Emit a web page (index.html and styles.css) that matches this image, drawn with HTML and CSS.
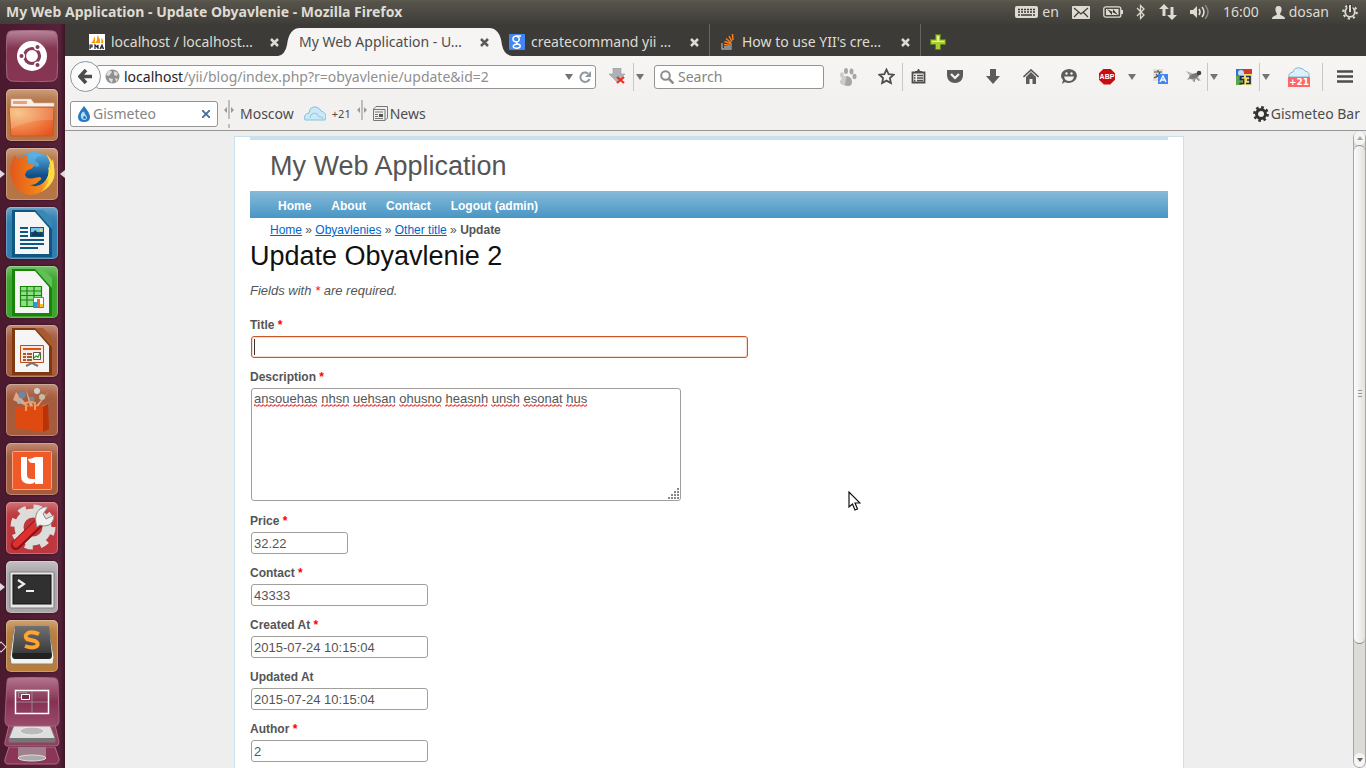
FILE: index.html
```html
<!DOCTYPE html>
<html lang="en">
<head>
<meta charset="utf-8">
<title>My Web Application - Update Obyavlenie</title>
<link rel="stylesheet" href="styles.css">
</head>
<body>
<header class="panel">
  <span class="panel-title">My Web Application - Update Obyavlenie - Mozilla Firefox</span>
  <div class="indicators">
    <span class="indicator"><svg width="23" height="12" viewBox="0 0 23 12"><rect width="23" height="12" rx="2" fill="#dfdbd2"/><path d="M3 3.5h17M3 6h17" stroke="#3c3b37" stroke-width="1.6" stroke-dasharray="2 1"/><path d="M3 9h2M6 9h11M18 9h2" stroke="#3c3b37" stroke-width="1.5"/></svg>en</span>
    <svg width="18" height="13" viewBox="0 0 18 13"><rect width="18" height="13" rx="1" fill="#dfdbd2"/><path d="M2 2l7 6 7-6M2 11l5-5M16 11l-5-5" fill="none" stroke="#3c3b37" stroke-width="1.2"/></svg>
    <svg width="20" height="12" viewBox="0 0 20 12"><rect x=".8" y=".8" width="17" height="10.4" rx="2" fill="none" stroke="#dfdbd2" stroke-width="1.3"/><path d="M19 4v4" stroke="#dfdbd2" stroke-width="2"/><rect x="3" y="3" width="12.500" height="6" fill="#dfdbd2"/><path d="M4 3l6 3V3l5 6-6-3v3z" fill="#3c3b37"/></svg>
    <svg width="10" height="16" viewBox="0 0 10 16"><path d="M1 4l7 7-3.500 3.500v-13L8 5l-7 7" fill="none" stroke="#dfdbd2" stroke-width="1.3"/></svg>
    <svg width="18" height="16" viewBox="0 0 18 16"><path d="M5 0l5 5H6.500v7h-3V5H0zM13 16l5-5h-3.500V3h-3v8H8z" fill="#dfdbd2"/></svg>
    <svg width="20" height="14" viewBox="0 0 20 14"><path d="M0 5h3l4-4v12L3 9H0z" fill="#dfdbd2"/><path d="M9 4q2 3 0 6M12 2q4 5 0 10" fill="none" stroke="#dfdbd2" stroke-width="1.600"/><path d="M15 0q6 7 0 14" fill="none" stroke="#8a8780" stroke-width="1.500"/></svg>
    <span>16:00</span>
    <span class="indicator"><svg width="13" height="13" viewBox="0 0 13 13"><path d="M6.500 0c2.500 0 3.500 2 3 4.500C9.200 6.300 8 7 8.200 8.500c.3 1.300 4.800 1 4.800 4.500H0c0-3.500 4.500-3.200 4.800-4.500C5 7 3.800 6.300 3.500 4.500 3 2 4 0 6.500 0z" fill="#dfdbd2"/></svg>dosan</span>
    <svg width="16" height="16" viewBox="0 0 16 16"><circle cx="8" cy="8" r="4.800" fill="none" stroke="#dfdbd2" stroke-width="1.800"/><circle cx="8" cy="8" r="6.700" fill="none" stroke="#dfdbd2" stroke-width="2.200" stroke-dasharray="2.200 3.060"/><path d="M8 0v8" stroke="#3c3b37" stroke-width="5"/><path d="M8 1v7" stroke="#dfdbd2" stroke-width="2"/></svg>
  </div>
</header>

<div class="desktop">
  <nav class="launcher" aria-label="Launcher">
    <button class="app app-dash" aria-label="Dash"><svg viewBox="0 0 52 52"><path d="M5 1Q26-1 47 1q3 0 4 4 2 21 0 42-1 3-4 4-21 2-42 0-3-1-4-4-2-21 0-42 1-4 4-4z" fill="url(#dash)" stroke="#a26780"/><circle cx="26" cy="26" r="15" fill="#fff"/><circle cx="26" cy="26" r="7.500" fill="none" stroke="#863c5a" stroke-width="3.200"/><g fill="#863c5a" stroke="#fff" stroke-width="1.500"><circle cx="15.500" cy="26" r="2.800"/><circle cx="31.500" cy="17" r="2.800"/><circle cx="31.500" cy="35" r="2.800"/></g><defs><linearGradient id="dash" x2="0" y2="1"><stop stop-color="#b9889c"/><stop offset=".35" stop-color="#823650"/><stop offset="1" stop-color="#873452"/></linearGradient></defs></svg></button>
    <button class="app app-tan" aria-label="Files"><svg viewBox="0 0 52 52"><path d="M5 10h20l3 4h20v8H5z" fill="#f4f1ed" stroke="#c6b8a8" stroke-width=".6"/><path d="M7 12h14v3H7z" fill="#f1a06d"/><path d="M3 18h45l-1 29H5z" fill="url(#folder)" stroke="#c45a24"/><path d="M4 19h43v12Q24 30 5 40z" fill="#fff" opacity=".15"/><defs><radialGradient id="folder" cx=".2" cy=".2" r="1"><stop stop-color="#f7bd78"/><stop offset="1" stop-color="#e95420"/></radialGradient></defs></svg></button>
    <button class="app app-tan app-running app-focused" aria-label="Firefox"><svg viewBox="0 0 52 52"><circle cx="28" cy="24" r="20" fill="url(#globe)"/><path d="M20 8q9-5 18 0-8-1-9 5 6 2 3 6-5-2-9 1-1-6-3-12z" fill="#60b7e7" opacity=".6"/><path d="M9 7l3 5q4-4 10-5-2 5 0 8l6 2q-1 4-6 5-3 2-3 5 2 5 9 3l6-1q3 2-1 4-3 4-9 4 7 3 13-2 7-6 6-18l4-6q3 13-2 23-8 13-21 13-12-1-17-12Q2 23 6 14q1-4 3-7z" fill="url(#fox)"/><path d="M40 6q11 10 8 24-3 9-13 14 7-6 8-14l-3 3q4-8 2-14l3 3q0-8-5-16z" fill="#ffdc45"/><defs><linearGradient id="globe" x2="0" y2="1"><stop stop-color="#5ab4e6"/><stop offset=".6" stop-color="#114d88"/></linearGradient><linearGradient id="fox" x2="1"><stop stop-color="#e3571a"/><stop offset=".7" stop-color="#f28a1c"/><stop offset="1" stop-color="#ffd93b"/></linearGradient></defs></svg></button>
    <button class="app app-blue" aria-label="Writer"><svg viewBox="0 0 52 52"><path d="M6 3h28l12 15v32H6z" fill="#0f5682"/><path d="M9 5h20l14 16v26H9z" fill="#f5f5f5"/><path d="M29 3h8l9 9v10z" fill="#3887b4"/><path d="M14 21h8M14 25h8M14 29h8M14 33h24M14 37h24M14 41h18" stroke="#0f5682" stroke-width="2"/><path d="M24 20h14v10H24z" fill="#0f5682"/><path d="M25 21h12v4H25z" fill="#7cc5e6"/><path d="M25 29l4-6 4 4 2-2 2 4z" fill="#163c54"/><circle cx="35" cy="23" r="1.500" fill="#ffd64d"/></svg></button>
    <button class="app app-green" aria-label="Calc"><svg viewBox="0 0 52 52"><path d="M6 3h28l12 15v32H6z" fill="#178509"/><path d="M9 5h20l14 16v26H9z" fill="#f5f5f5"/><path d="M29 3h8l9 9v10z" fill="#5fc154"/><path d="M14 20h22v21H14z" fill="#8fe084"/><path d="M14 20.500h22M14 25h22M14 29.500h22M14 34h22M14 40.500h22M14.500 20v21M21 20v21M28 20v21M35.500 20v21" stroke="#178509" stroke-width="1.200"/><path d="M27.500 31.500h10v10h-10z" fill="#fff" stroke="#777"/><path d="M28 36h3v5h-3z" fill="#2798df"/><path d="M31 33h3v8h-3z" fill="#e56a2c"/><path d="M34 38h3v3h-3z" fill="#f7c12b"/></svg></button>
    <button class="app app-brown" aria-label="Impress"><svg viewBox="0 0 52 52"><path d="M6 3h28l12 15v32H6z" fill="#80380f"/><path d="M9 5h20l14 16v26H9z" fill="#f5f5f5"/><path d="M29 3h8l9 9v10z" fill="#a75b31"/><path d="M14.500 20.500h23v17h-23z" fill="#fbe9df" stroke="#ba4d17"/><path d="M17 24h18" stroke="#d25716" stroke-width="2"/><path d="M17 29h3M17 32h3M17 35h3M21 29h5M21 32h5M21 35h5" stroke="#7e2c08" stroke-width="1.500"/><path d="M27.500 27.500h7v7h-7z" fill="#fff" stroke="#555"/><path d="M28 33l2-2 2 1 2-4" fill="none" stroke="#2b9d21" stroke-width="1.400"/><path d="M26 38l-6 3M26 38l6 3" stroke="#777" stroke-width="2"/></svg></button>
    <button class="app app-brown" aria-label="Software Center"><svg viewBox="0 0 52 52"><path d="M10 8l14 16L20 6l8 18L43 7 31 24l14-6-16 8-22-10z" fill="#f6c5aa" opacity=".7"/><circle cx="16" cy="11" r="3.500" fill="#6788a7"/><circle cx="31" cy="7" r="3" fill="#d3d1cf"/><circle cx="36" cy="13" r="3" fill="#c8bc9d"/><circle cx="26" cy="15" r="2.500" fill="#7b8995"/><circle cx="13" cy="18" r="2" fill="#9fb5c6"/><path d="M9 23l31-1 2 23-6 3-26-4z" fill="#df4a10"/><path d="M37 23l5-3 1 25-6 3z" fill="#b93309"/><path d="M20 27v-8q5-2 9 0v7" fill="none" stroke="#f49a58" stroke-width="2"/></svg></button>
    <button class="app app-brown" aria-label="Ubuntu One"><svg viewBox="0 0 52 52"><rect x="6.500" y="8.500" width="39" height="38" rx="1" fill="#f05a28" stroke="#ffa47e"/><path d="M15 14h6v18q0 4 5 4h3V20h-3q-3 0-4-4 4 0 7-2h8v27h-8v-2q-2 2-5 2-9 0-9-8z" fill="#fff"/></svg></button>
    <button class="app app-red" aria-label="System Settings"><svg viewBox="0 0 52 52"><circle cx="27" cy="25" r="14" fill="none" stroke="#dcdcda" stroke-width="9"/><circle cx="27" cy="25" r="20" fill="none" stroke="#dcdcda" stroke-width="5" stroke-dasharray="8 7.700"/><path d="M10 43l25-24" stroke="#8f1010" stroke-width="10" stroke-linecap="round"/><path d="M10 42l22-21" stroke="#dd3030" stroke-width="7" stroke-linecap="round"/><path d="M30 21q-2-9 4-14 4-3 8-2l-5 7 3 5 8-4q0 7-5 10-5 2-9 0l-3 2z" fill="#f0f0ee" stroke="#888"/></svg></button>
    <button class="app app-gray app-running" aria-label="Terminal"><svg viewBox="0 0 52 52"><rect x="4" y="11" width="44" height="36" rx="1" fill="#e8e8e8" stroke="#7f7f7f"/><rect x="7" y="14" width="38" height="29" fill="#303030" stroke="#111"/><path d="M12 19l6 4-6 4" fill="none" stroke="#eee" stroke-width="2.200"/><path d="M20 30h8" stroke="#eee" stroke-width="2"/></svg></button>
    <button class="app app-gold app-open" aria-label="Sublime Text"><svg viewBox="0 0 52 52"><path d="M8 8h35l5 29-1 7H5l-1-7z" fill="#f2f2ef" stroke="#8a806f"/><path d="M9 6h34l3 29q0 4-3 4H9q-3 0-3-4z" fill="url(#key)"/><path d="M33 14q-7-3-11-1-4 3-1 6 3 1 8 2 4 2 2 5-4 3-12 0" fill="none" stroke="#ffa333" stroke-width="4"/><defs><linearGradient id="key" x2="0" y2="1"><stop stop-color="#707070"/><stop offset=".82" stop-color="#3b3b3b"/><stop offset=".83" stop-color="#222"/></linearGradient></defs></svg></button>
    <button class="app app-spaces" aria-label="Workspaces"><svg viewBox="0 0 56 50"><path d="M5 1Q28-1 51 1q2 0 3 4l1 38q0 6-4 6H5q-4 0-4-6L3 5q0-4 2-4z" fill="url(#ws)" stroke="#a5617e"/><path d="M11.500 13.500h33v23h-33zM28 13v24M11 25h34" fill="none" stroke="#96868d" stroke-width="1"/><path d="M11.500 13.500h33v23h-33z" fill="none" stroke="#fff" stroke-width="1.500"/><path d="M14.500 15.500h8v5h-8z" fill="none" stroke="#96868d"/><path d="M17.500 17.500h8v5h-8z" fill="#762b4a" stroke="#fff"/><defs><linearGradient id="ws" x2="0" y2="1"><stop stop-color="#b4778f"/><stop offset=".5" stop-color="#863153"/><stop offset="1" stop-color="#9a4b6c"/></linearGradient></defs></svg></button>
    <button class="app app-folded" aria-label="Drive"><svg viewBox="0 0 56 22"><path d="M5 0h46l4 17q0 4-4 4H4q-4 0-3-4z" fill="#91405f" stroke="#b06884"/><path d="M10 0h36l5 13v4H5v-4z" fill="#dedede" stroke="#777"/><ellipse cx="28" cy="6" rx="12" ry="4" fill="#bbb" stroke="#eee"/><path d="M5 13h46v4H5z" fill="#777"/></svg></button>
    <button class="app app-folded" aria-label="Trash"><svg viewBox="0 0 56 22"><path d="M5 0h46l4 12q0 5-4 5H4q-4 0-3-5z" fill="#8c3657" stroke="#b06884"/><path d="M14 0h28v11q-14 5-28 0z" fill="#a17f8d"/><ellipse cx="28" cy="11" rx="14" ry="3" fill="#aaa" stroke="#ddd"/></svg></button>
  </nav>

  <div class="browser">
    <div class="tabs">
      <div class="tab">
        <svg width="16" height="16" viewBox="0 0 16 16"><path d="M0 0h16v16H0z" fill="#fff"/><path d="M2 9q3-2 3-7 2 3 1 7zM6 9q3-3 2-8 4 4 3 8zM12 9q1-3 0-5 3 2 2 5z" fill="#f90"/><path d="M1 15v-4h2v2H1M6 15v-4l2 2 1-2v4M11 15l2-4 1.500 4M12 14h2" fill="none" stroke="#223" stroke-width="1.200"/></svg>
        <button class="tab-label">localhost / localhost…</button>
        <button class="tab-close" aria-label="Close tab"><svg width="9" height="9" viewBox="0 0 9 9"><path d="M1 1l7 7M8 1L1 8"/></svg></button>
      </div>
      <div class="tab tab-active">
        <svg class="tab-shape" viewBox="0 0 234 28" preserveAspectRatio="none"><path d="M0 28Q7 27 9 17 11 0 22 0H211Q222 0 224 17 226 27 234 28z" fill="#f6f5f4"/></svg>
        <button class="tab-label">My Web Application - U…</button>
        <button class="tab-close" aria-label="Close tab"><svg width="9" height="9" viewBox="0 0 9 9"><path d="M1 1l7 7M8 1L1 8"/></svg></button>
      </div>
      <div class="tab tab-ruled">
        <svg width="16" height="16" viewBox="0 0 16 16"><rect width="16" height="16" rx="1" fill="#4285f4"/><path d="M12 2H8Q4 2 4 5t4 3q3-1 2-4-1-2-3-2M8 8q-1 1 1 2 3 1 2 3-2 2-5 1-3-1-1-3 2-1 4-1" fill="none" stroke="#fff" stroke-width="1.500"/></svg>
        <button class="tab-label">createcommand yii …</button>
        <button class="tab-close" aria-label="Close tab"><svg width="9" height="9" viewBox="0 0 9 9"><path d="M1 1l7 7M8 1L1 8"/></svg></button>
      </div>
      <div class="tab tab-ruled">
        <svg width="16" height="16" viewBox="0 0 16 16"><path d="M2 9v6h9V9" fill="none" stroke="#a5a5a5" stroke-width="1.300"/><path d="M4 13h6" stroke="#aaa" stroke-width="1.500"/><path d="M4 10.500l6 .7M4.500 7.500l6 2M6 4.500l5 4M9 2l3 5.500M12.500 0l.5 6" stroke="#f48024" stroke-width="1.500"/></svg>
        <button class="tab-label">How to use YII's cre…</button>
        <button class="tab-close" aria-label="Close tab"><svg width="9" height="9" viewBox="0 0 9 9"><path d="M1 1l7 7M8 1L1 8"/></svg></button>
      </div>
      <button class="tab-new" aria-label="New tab"><svg width="16" height="16" viewBox="0 0 16 16"><path d="M5.500.5h5v5h5v5h-5v5h-5v-5h-5v-5h5z" fill="#a9cc32" stroke="#5c821b"/><path d="M7 2h2v5h5v1H2V7h5z" fill="#e3f19a"/></svg></button>
    </div>

    <div class="navbar">
      <button class="back" aria-label="Back"><svg width="15" height="15" viewBox="0 0 15 15"><path d="M8 1L2 7.500 8 14M2 7.500h12" fill="none" stroke="#4c4c4c" stroke-width="3.600"/></svg></button>
      <div class="address">
        <svg width="15" height="15" viewBox="0 0 15 15"><circle cx="7.500" cy="7.500" r="7" fill="#8f8f8f"/><path d="M3 2q3-1 4 1L4 7 1 6zM9 2l4 2-1 3-3-1zM4 9l4 1-1 4-3-3zM10 9l3 1-2 3z" fill="#dcdcdc"/></svg>
        <span class="url"><b>localhost</b>/yii/blog/index.php?r=obyavlenie/update&amp;id=2</span>
        <button class="bare" aria-label="History"><svg width="8" height="6" viewBox="0 0 8 6"><path d="M0 0h8L4 6z" fill="#737373"/></svg></button>
        <button class="bare" aria-label="Reload"><svg width="12" height="12" viewBox="0 0 12 12"><path d="M10.500 8A4.700 4.700 0 1 1 9 2.500" fill="none" stroke="#8c97a0" stroke-width="2"/><path d="M12 0v6H6z" fill="#8c97a0"/></svg></button>
      </div>
      <button class="tool tool-snug tool-ruled tool-download" aria-label="Downloader"><svg width="17" height="17" viewBox="0 0 17 17"><path d="M4 0h8v6h4l-8 8-8-8h4z" fill="#aeb2b5" stroke="#8d9194" stroke-width=".5"/><path d="M8 9l7 6M15 9l-7 6" stroke="#f02b20" stroke-width="2.200"/></svg></button>
      <button class="drop" aria-label="Downloader menu"><svg width="8" height="6" viewBox="0 0 8 6"><path d="M0 0h8L4 6z" fill="#737373"/></svg></button>
      <label class="search"><svg width="14" height="14" viewBox="0 0 14 14"><circle cx="5.500" cy="5.500" r="4.300" fill="none" stroke="#8c8c8c" stroke-width="2"/><path d="M8.500 8.500l5 5" stroke="#8c8c8c" stroke-width="2.500"/></svg><input type="search" placeholder="Search" aria-label="Search"></label>
      <button class="tool tool-paw" aria-label="Paw"><svg width="18" height="18" viewBox="0 0 18 18"><g fill="#a6a6a6"><ellipse cx="7" cy="3" rx="2" ry="3"/><ellipse cx="12.500" cy="3.500" rx="2" ry="3"/><ellipse cx="3" cy="7" rx="2" ry="2.800" fill="#ccc"/><ellipse cx="15.500" cy="8.500" rx="2" ry="2.800"/><path d="M8 8q5 1 5 6 0 4-4 4-7-1-8-4 2-6 7-6z"/></g><path d="M7.500 8L6 17q-5-1-5-3 2-6 6.500-6z" fill="#ccc"/></svg></button>
      <button class="tool tool-snug tool-ruled" aria-label="Bookmark"><svg width="17" height="17" viewBox="0 0 17 17"><path d="M8.500 1.500l2.100 4.600 5 .6-3.700 3.400 1 5-4.400-2.500-4.400 2.500 1-5-3.700-3.400 5-.6z" fill="none" stroke="#4d4d4d" stroke-width="1.800"/></svg></button>
      <button class="tool tool-snug tool-list" aria-label="Bookmarks"><svg width="15" height="15" viewBox="0 0 15 15"><path d="M1.500 3.500h12v10h-12z" fill="#f4f4f4" stroke="#4d4d4d" stroke-width="1.800"/><path d="M4 4V2h2l1-2h1l1 2h2v2z" fill="#4d4d4d"/><path d="M3 6.500h1.500M6 6.500h6M3 9h1.500M6 9h6M3 11.500h1.500M6 11.500h6" stroke="#4d4d4d" stroke-width="1.300"/></svg></button>
      <button class="tool" aria-label="Pocket"><svg width="16" height="15" viewBox="0 0 16 15"><path d="M0 1h16v6q-1 7-8 7T0 7z" fill="#5b5b5b"/><path d="M4 5l4 4 4-4" fill="none" stroke="#f4f4f4" stroke-width="2.200"/></svg></button>
      <button class="tool" aria-label="Downloads"><svg width="14" height="15" viewBox="0 0 14 15"><path d="M4 0h6v7h4l-7 8-7-8h4z" fill="#5b5b5b"/></svg></button>
      <button class="tool" aria-label="Home"><svg width="16" height="15" viewBox="0 0 16 15"><path d="M.5 8L8 1l7.500 7" fill="none" stroke="#5b5b5b" stroke-width="1.700"/><path d="M3 8l5-5 5 5v7h-3.500v-5h-3v5H3z" fill="#5b5b5b"/></svg></button>
      <button class="tool" aria-label="Hello"><svg width="16" height="15" viewBox="0 0 16 15"><path d="M8 0q8 1 8 7-1 6-8 7-3 0-4-1l-3 2 1-4Q0 9 0 7q0-6 8-7z" fill="#5b5b5b"/><path d="M3 7.500h10Q12 12 8 12T3 7.500z" fill="#f4f4f4"/><circle cx="5.500" cy="4.500" r="1.200" fill="#f4f4f4"/><circle cx="10.500" cy="4.500" r="1.200" fill="#f4f4f4"/></svg></button>
      <button class="tool" aria-label="Adblock Plus"><span class="abp">ABP</span></button>
      <button class="drop" aria-label="Adblock menu"><svg width="8" height="6" viewBox="0 0 8 6"><path d="M0 0h8L4 6z" fill="#737373"/></svg></button>
      <button class="tool tool-translate" aria-label="Translate"><svg width="16" height="16" viewBox="0 0 16 16"><path d="M0 0h10v12H0z" fill="#e3e0cf"/><path d="M1 3h8M5 1v2M7 3Q6 7 1 9M3 5l4 5" fill="none" stroke="#555" stroke-width="1.200"/><path d="M5 5h10v10H5z" fill="#4285f4"/><path d="M7 13l3-6 3 6M8 11h4" fill="none" stroke="#fff" stroke-width="1.300"/></svg></button>
      <button class="tool tool-snug tool-ruled" aria-label="Firebug"><svg width="16" height="13" viewBox="0 0 16 13"><path d="M4 6L0 1l8 3 7-2-3 5 3 4-5-2-2 3-3-3-4 1z" fill="#b1b1b1"/><ellipse cx="8" cy="6" rx="5" ry="2.500" fill="#777" transform="rotate(-20 8 6)"/><circle cx="13" cy="3" r="2.300" fill="#444"/><path d="M2 9l4-3M8 12l1-4M13 11l-3-4" stroke="#888"/></svg></button>
      <button class="drop" aria-label="Firebug menu"><svg width="8" height="6" viewBox="0 0 8 6"><path d="M0 0h8L4 6z" fill="#737373"/></svg></button>
      <button class="tool tool-snug tool-ruled tool-storage" aria-label="S3 storage"><svg width="16" height="16" viewBox="0 0 16 16"><path d="M0 0h7v7H0z" fill="#3575c5"/><path d="M7 0h9v5H7z" fill="#d3392c"/><path d="M0 7h6v9H0z" fill="#59a748"/><path d="M6 5h10v11H6z" fill="#f3df67"/><circle cx="5" cy="4" r="3" fill="#c1dcf3"/><path d="M8 7.500H4.500v3h3v4h-4M10 7.500h4v7h-4M11 11h3" fill="none" stroke="#172b66" stroke-width="1.700"/></svg></button>
      <button class="drop" aria-label="Storage menu"><svg width="8" height="6" viewBox="0 0 8 6"><path d="M0 0h8L4 6z" fill="#737373"/></svg></button>
      <button class="tool tool-weather tool-ruled" aria-label="Weather"><svg width="22" height="10" viewBox="0 0 22 10"><path d="M1 10Q0 6 5 5q1-5 7-4 4 1 5 3 5 1 4 6z" fill="#dceffa" stroke="#80b9d5"/></svg><span class="temp">+21</span></button>
      <button class="tool tool-menu" aria-label="Menu"><svg width="16" height="13" viewBox="0 0 16 13"><path d="M0 1.500h16M0 6.500h16M0 11.500h16" stroke="#4d4d4d" stroke-width="2.600"/></svg></button>
    </div>

    <div class="weatherbar">
      <label class="gismeteo"><svg width="12" height="16" viewBox="0 0 12 16"><path d="M6 0q6 7 6 11 0 5-6 5t-6-5Q0 7 6 0z" fill="#2879c0"/><path d="M3 8q3-5 4 0 4 4 0 6-5 0-4-6z" fill="#b4dcf6"/><circle cx="6.500" cy="11.500" r="1.500" fill="#2879c0"/></svg><input type="text" placeholder="Gismeteo" aria-label="Gismeteo"><button class="bare" aria-label="Clear"><svg width="8" height="8" viewBox="0 0 8 8"><path d="M0 0l8 8M8 0L0 8" stroke="#426a9f" stroke-width="1.800"/></svg></button></label>
      <svg class="grip" width="10" height="28" viewBox="0 0 10 28"><path d="M5 0v19M5 24v4" stroke="#8b8b8b"/><path d="M3 7v6L0 10zM7 7v6l3-3z" fill="#999"/></svg>
      <span>Moscow</span>
      <svg class="cloud" width="22" height="15" viewBox="0 0 22 15"><path d="M1 14Q-1 8 5 7q1-7 7-6 4 1 5 4 7 2 4 9z" fill="#cbe8f7" stroke="#82bfe0"/><path d="M6 12q0-4 4-5 4 0 5 4 3-1 4 2" fill="none" stroke="#8fc7e4"/></svg>
      <small>+21</small>
      <svg class="grip" width="10" height="28" viewBox="0 0 10 28"><path d="M5 0v20" stroke="#8b8b8b"/><path d="M3 7v6L0 10zM7 7v6l3-3z" fill="#999"/></svg>
      <a class="news" href="#news"><svg width="15" height="15" viewBox="0 0 15 15"><path d="M3 .5h11.500V12L12 14.500H.5V3z" fill="#eee" stroke="#777"/><path d="M.5 3.500H12v11M2 6h8M2 8.500h3M2 10.500h3M2 12.500h8" fill="none" stroke="#777"/><path d="M6 8h4v3H6z" fill="#555"/></svg>News</a>
      <button class="settings"><svg width="16" height="16" viewBox="0 0 16 16"><circle cx="8" cy="8" r="4.500" fill="none" stroke="#333" stroke-width="3"/><circle cx="8" cy="8" r="6.600" fill="none" stroke="#333" stroke-width="2.600" stroke-dasharray="2.600 2.580"/></svg>Gismeteo Bar</button>
    </div>

    <div class="viewport">
      <main class="canvas">
        <div class="page">
          <div class="logo">My Web Application</div>
          <nav class="mainmenu"><a href="#home">Home</a><a href="#about">About</a><a href="#contact">Contact</a><a href="#logout">Logout (admin)</a></nav>
          <div class="breadcrumbs"><a href="#home">Home</a> » <a href="#list">Obyavlenies</a> » <a href="#item">Other title</a> » <b>Update</b></div>
          <h1>Update Obyavlenie 2</h1>
          <form>
            <p class="note">Fields with <span class="required">*</span> are required.</p>
            <div class="row"><label for="title">Title <span class="required">*</span></label><input class="field field-long field-current" id="title" type="text"></div>
            <div class="row"><label for="description">Description <span class="required">*</span></label>
              <div class="editor"><textarea class="field" id="description" spellcheck="false">ansouehas nhsn uehsan ohusno heasnh unsh esonat hus</textarea>
                <svg class="squiggles" width="336" height="3" aria-hidden="true"><defs><pattern id="wave" width="4" height="3" patternUnits="userSpaceOnUse"><path d="M-1 3.500L1 .5 3 2.500 5 .5" fill="none" stroke="#f00"/></pattern></defs><g fill="url(#wave)"><rect width="63" height="3"/><rect x="67" width="28" height="3"/><rect x="99" width="42" height="3"/><rect x="145" width="42" height="3"/><rect x="191" width="42" height="3"/><rect x="237" width="28" height="3"/><rect x="269" width="39" height="3"/><rect x="312" width="21" height="3"/></g></svg>
              </div></div>
            <div class="row"><label for="price">Price <span class="required">*</span></label><input class="field field-short" id="price" type="text" value="32.22"></div>
            <div class="row"><label for="contact">Contact <span class="required">*</span></label><input class="field" id="contact" type="text" value="43333"></div>
            <div class="row"><label for="created">Created At <span class="required">*</span></label><input class="field" id="created" type="text" value="2015-07-24 10:15:04"></div>
            <div class="row"><label for="updated">Updated At</label><input class="field" id="updated" type="text" value="2015-07-24 10:15:04"></div>
            <div class="row"><label for="author">Author <span class="required">*</span></label><input class="field" id="author" type="text" value="2"></div>
          </form>
          <svg class="pointer" width="13" height="20" viewBox="0 0 13 20"><path d="M1 1v15l3.500-3 2.500 6 2.500-1L7 12h5z" fill="#fff" stroke="#111" stroke-width="1.200"/></svg>
        </div>
      </main>
      <div class="scrollbar">
        <button class="scroll-step" aria-label="Scroll up"><svg width="6" height="4" viewBox="0 0 6 4"><path d="M0 4h6L3 0z" fill="#aaa"/></svg></button>
        <div class="scroll-track"><div class="scroll-thumb"><svg width="4" height="8" viewBox="0 0 4 8"><path d="M0 .5h4M0 3.500h4M0 6.500h4" stroke="#999"/></svg></div></div>
        <button class="scroll-step" aria-label="Scroll down"><svg width="6" height="4" viewBox="0 0 6 4"><path d="M0 0h6L3 4z" fill="#666"/></svg></button>
      </div>
    </div>
  </div>
</div>
</body>
</html>
```

FILE: styles.css
```css
* { box-sizing: border-box; }
body {
  margin: 0;
  height: 100vh;
  display: flex;
  flex-direction: column;
  overflow: hidden;
  font: 14px/20px "Noto Sans", sans-serif;
  color: #4c4c4c;
}
button, input, textarea { font: inherit; color: inherit; }
button { padding: 0; border: 0; background: none; }
svg { display: block; flex: none; }

/* Top panel */
.panel {
  flex: none;
  height: 24px;
  padding: 0 8px 0 6px;
  display: flex;
  align-items: center;
  justify-content: space-between;
  background: linear-gradient(#5d5a4e, #55534a 10%, #3e3d38);
  color: #dfdbd2;
  white-space: nowrap;
}
.panel-title { font-weight: bold; }
.indicators { display: flex; align-items: center; gap: 13px; }
.indicator { display: flex; align-items: center; gap: 4px; }

.desktop { flex: 1; min-height: 0; display: flex; }

/* Launcher */
.launcher {
  flex: none;
  width: 65px;
  padding: 6px 0 0 6px;
  display: flex;
  flex-direction: column;
  gap: 7px;
  overflow: hidden;
  background: linear-gradient(90deg, #4b1a2f, #57213a 92%, #3c1525);
}
.app {
  position: relative;
  flex: none;
  width: 52px;
  height: 52px;
  border-radius: 5px;
}
.app svg { width: 100%; height: 100%; }
.app-tan, .app-blue, .app-green, .app-brown, .app-red, .app-gray, .app-gold {
  box-shadow: inset 0 0 0 1px rgba(255, 255, 255, .25), inset 0 12px 12px -8px rgba(255, 255, 255, .4), 0 0 2px #210b17;
}
.app-tan { background: #b67547; }
.app-blue { background: #2f7eaf; }
.app-green { background: #3ca52c; }
.app-brown { background: #a65b3d; }
.app-red { background: #bd383e; }
.app-gray { background: #aaa5a8; }
.app-gold { background: #b97d3b; }
.app-running::before, .app-open::before, .app-focused::after {
  content: "";
  position: absolute;
  top: 22px;
  border: solid transparent;
  border-width: 4px 5px;
}
.app-running::before { left: -6px; border-left-color: #e0d8dc; border-right-width: 0; }
.app-open::before { left: -9px; top: 23px; width: 6px; height: 6px; border: 1px solid #e0d8dc; transform: rotate(45deg); }
.app-focused::after { right: -7px; border-right-color: #e0d8dc; border-left-width: 0; }
.app-spaces { width: 56px; height: 50px; margin: -2px 0 -9px -2px; z-index: 1; }
.app-folded { width: 56px; height: 22px; margin: 0 0 -7px -2px; }

/* Tabs */
.browser { flex: 1; min-width: 0; display: flex; flex-direction: column; background: #f2f1f0; }
.tabs {
  flex: none;
  height: 32px;
  padding-left: 14px;
  display: flex;
  background: #3c3b37;
  color: #dfdbd2;
}
.tab {
  position: relative;
  width: 210px;
  padding: 4px 10px 0 10px;
  display: flex;
  align-items: center;
  gap: 6px;
}
.tab-ruled { width: 211px; border-right: 1px solid #67665c; }
.tab-active { color: #4c4c4c; }
.tab-shape { position: absolute; left: -11px; bottom: 0; width: 234px; height: 28px; }
.tab-label { position: relative; flex: 1; min-width: 0; text-align: left; white-space: nowrap; overflow: hidden; }
.tab-close { position: relative; width: 9px; stroke: #dfdbd2; stroke-width: 2.500; }
.tab-active .tab-close { stroke: #5a5a5a; }
.tab-new { margin: 4px 0 0 9px; }

/* Navigation toolbar */
.navbar {
  flex: none;
  height: 41px;
  padding-left: 5px;
  display: flex;
  align-items: center;
  background: linear-gradient(#f7f6f5, #f2f1f0);
}
.back {
  position: relative;
  z-index: 1;
  width: 31px;
  height: 31px;
  display: grid;
  place-items: center;
  border: 1px solid #8b98a3;
  border-radius: 50%;
  background: #fafafa;
}
.address, .search, .gismeteo {
  display: flex;
  align-items: center;
  border: 1px solid #969492;
  border-radius: 3px;
  background: #fff;
}
.address { flex: 1; min-width: 0; height: 24px; margin-left: -5px; padding: 0 4px 0 8px; gap: 4px; }
.url { flex: 1; min-width: 0; overflow: hidden; white-space: nowrap; color: #8f8f8f; }
.url b { font-weight: normal; color: #222; }
.address .bare { margin-left: 2px; }
.tool {
  flex: none;
  width: 38px;
  height: 28px;
  display: grid;
  place-items: center;
}
.tool-snug { width: 32px; }
.tool-ruled { border-right: 1px solid #c3c8cc; }
.tool-download { margin-left: 6px; }
.tool-paw { margin: 0 4px 0 5px; }
.tool-list { width: 31px; }
.tool-list + .tool { margin-left: 2px; }
.tool-translate { margin-left: 4px; }
.tool-translate + .tool-snug { width: 28px; }
.tool-storage { margin-left: 8px; }
.tool-weather { width: 47px; margin-left: 4px; align-content: center; }
.tool-menu { width: 43px; }
.drop { flex: none; width: 12px; display: grid; place-items: center; }
.temp { width: 22px; background: #f66; color: #fff; font: bold 9px/10px "DejaVu Sans", sans-serif; }
.abp {
  width: 16px;
  height: 16px;
  clip-path: polygon(30% 0, 70% 0, 100% 30%, 100% 70%, 70% 100%, 30% 100%, 0 70%, 0 30%);
  background: #c70d12;
  color: #fff;
  font: bold 7px/16px "Liberation Sans", sans-serif;
}
.search { flex: none; width: 170px; height: 24px; margin-left: 8px; padding-left: 5px; gap: 4px; }
.search input, .gismeteo input { flex: 1; min-width: 0; padding: 0; border: 0; outline: 0; background: none; }
::placeholder { color: #858585; opacity: 1; }

/* Weather toolbar */
.weatherbar {
  flex: none;
  height: 34px;
  padding: 0 6px 0 5px;
  display: flex;
  align-items: center;
  gap: 6px;
  border-bottom: 1px solid #999695;
}
.gismeteo { width: 148px; height: 26px; padding: 0 7px; gap: 3px; }
.weatherbar small { font-size: 11px; }
.cloud { margin-left: 4px; }
.news, .settings { display: flex; align-items: center; gap: 2px; color: inherit; text-decoration: none; }
.settings { margin-left: auto; }

/* Web page */
.viewport { flex: 1; min-height: 0; display: flex; background: #eee; }
.canvas { flex: 1; min-width: 0; overflow: hidden; padding-top: 5px; }
.page {
  position: relative;
  max-width: 950px;
  min-height: 100%;
  margin: 0 auto;
  padding: 0 15px 24px;
  border: 1px solid #c9e0ed;
  background: #fff;
  color: #555;
  font: 13px/18px "Liberation Sans", Arial, sans-serif;
}
.logo { padding: 10px 20px 9px; border-top: 3px solid #c9e0ed; font-size: 27px; line-height: 32px; }
.mainmenu {
  height: 27px;
  padding: 0 20px;
  display: flex;
  align-items: center;
  gap: 4px;
  background: linear-gradient(#87bad8, #4896c5);
  font-size: 12px;
  font-weight: bold;
}
.mainmenu a { padding: 4px 8px 2px; color: #fff; text-decoration: none; }
.breadcrumbs { padding: 0 20px; font-size: 12px; line-height: 24px; }
.breadcrumbs a { color: #06c; }
h1 { margin: 0; font-size: 27px; line-height: 28px; font-weight: normal; color: #111; }
.note { margin: 12px 0 17px; font-style: italic; }
.required { color: #f00; }
.row { margin-bottom: 11px; }
.row label { display: block; margin-bottom: 3px; font-size: 12px; line-height: 16px; font-weight: bold; }
.field {
  display: block;
  width: 177px;
  height: 22px;
  margin: 0 1px;
  padding: 0 2px;
  border: 1px solid #a29e9a;
  border-radius: 3px;
  background: #fff;
  outline: 0;
}
.field-long { width: 497px; max-width: 100%; }
.field-short { width: 97px; }
.field-current {
  border-color: #cf5626;
  box-shadow: inset 0 0 0 1px #f8d9cc;
  background: linear-gradient(#333, #333) 2px 2px / 1px 16px no-repeat #fff;
}
.editor { position: relative; padding-bottom: 1px; }
textarea.field { width: 430px; height: 113px; padding: 1px 2px; }
textarea::-webkit-resizer {
  background:
    linear-gradient(135deg, #fff 50%, transparent 50%),
    radial-gradient(circle at 1px 1px, #888 1px, transparent 1px) 0 0 / 3px 3px;
}
.squiggles { position: absolute; left: 4px; top: 16px; }
.pointer { position: absolute; left: 613px; top: 354px; }

/* Scrollbar */
.scrollbar {
  flex: none;
  width: 13px;
  display: flex;
  flex-direction: column;
  border: 1px solid #aaa69f;
  border-top: 0;
  border-radius: 7px;
  background: #dddbd8;
}
.scroll-step { height: 14px; display: grid; place-items: center; border-radius: 7px; background: #f5f5f4; }
.scroll-track { flex: 1; min-height: 0; }
.scroll-thumb {
  height: 82%;
  display: grid;
  place-items: center;
  border: solid #8d8b88;
  border-width: 1px 0;
  border-radius: 6px;
  background: linear-gradient(90deg, #fbfbfa, #e4e2df);
}
```
